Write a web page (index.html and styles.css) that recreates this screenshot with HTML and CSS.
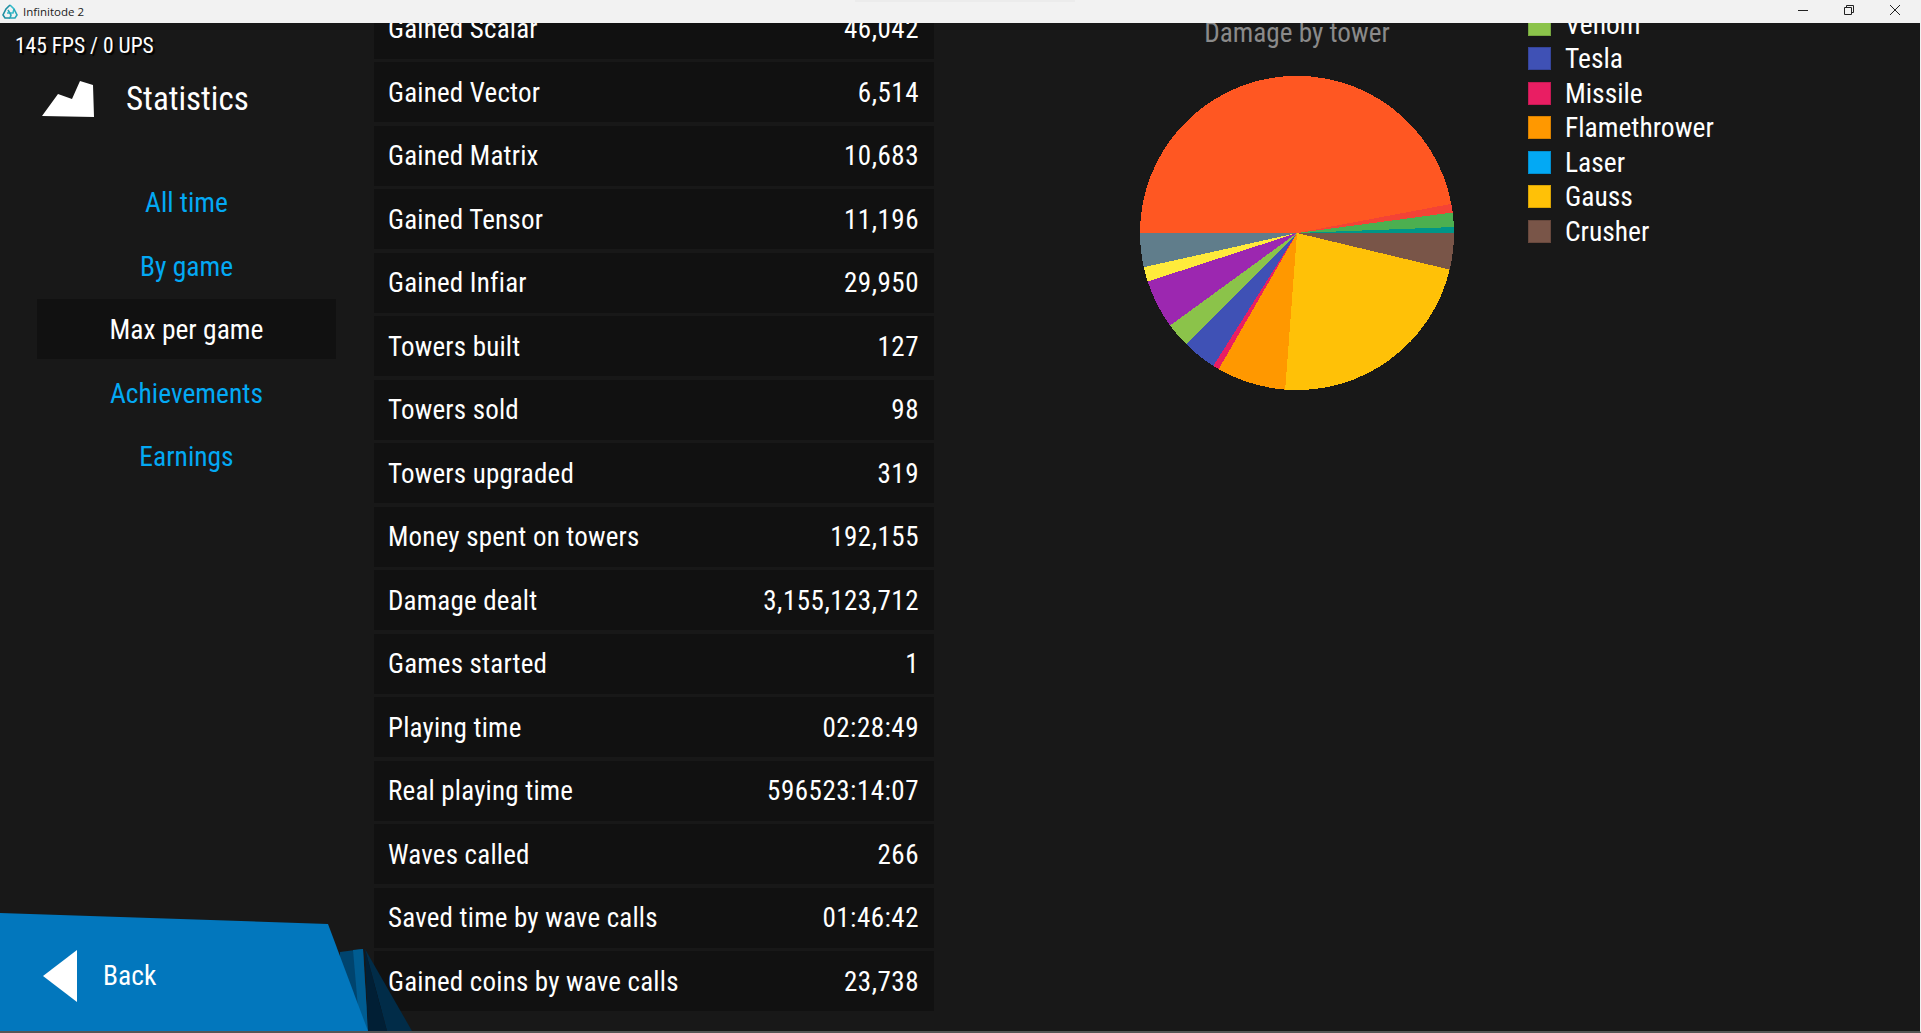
FILE: index.html
```html
<!DOCTYPE html>
<html lang="en">

<head>
    <meta charset="UTF-8">
    <title>Infinitode 2</title>
    <link rel="stylesheet" href="styles.css">
</head>

<body>
    <header class="titlebar">
        <svg class="app-icon" width="16" height="16" viewBox="0 0 16 16" fill="none" stroke-width="1.6">
            <path d="M8 1 L12 5 L11 9 L5 9" stroke="#35bccb"/>
            <path d="M8 1 L4 5 L1 11 L3 14 L8 14" stroke="#1f8fa3"/>
            <path d="M6 6 L9 11 L8 14 L13 14 L15 11 L12 5" stroke="#2aa7b8"/>
        </svg>
        <span class="app-name">Infinitode 2</span>
        <div class="win-buttons">
            <svg width="12" height="12" viewBox="0 0 12 12"><path d="M1 6.5H11" stroke="#222" fill="none"/></svg>
            <svg width="12" height="12" viewBox="0 0 12 12"><path d="M1.5 3.5H8.5V10.5H1.5Z M3.5 3.5V1.5H10.5V8.5H8.5" stroke="#222" fill="none"/></svg>
            <svg width="12" height="12" viewBox="0 0 12 12"><path d="M1 1L11 11M11 1L1 11" stroke="#222" fill="none"/></svg>
        </div>
    </header>

    <main class="screen">
        <!-- left menu -->
        <nav class="sidebar">
            <div class="fps">145 FPS / 0 UPS</div>
            <div class="side-title">
                <svg class="side-icon" width="54" height="38" viewBox="0 0 54 38">
                    <polygon points="1,36 17,14 31,19 39,1 52,5 53,37" fill="#fff"/>
                </svg>
                <span>Statistics</span>
            </div>
            <ul class="menu">
                <li>All time</li>
                <li>By game</li>
                <li class="on">Max per game</li>
                <li>Achievements</li>
                <li>Earnings</li>
            </ul>
        </nav>

        <!-- stat rows -->
        <section class="stats">
            <div class="row"><span>Gained Scalar</span><span class="val">46,042</span></div>
            <div class="row"><span>Gained Vector</span><span class="val">6,514</span></div>
            <div class="row"><span>Gained Matrix</span><span class="val">10,683</span></div>
            <div class="row"><span>Gained Tensor</span><span class="val">11,196</span></div>
            <div class="row"><span>Gained Infiar</span><span class="val">29,950</span></div>
            <div class="row"><span>Towers built</span><span class="val">127</span></div>
            <div class="row"><span>Towers sold</span><span class="val">98</span></div>
            <div class="row"><span>Towers upgraded</span><span class="val">319</span></div>
            <div class="row"><span>Money spent on towers</span><span class="val">192,155</span></div>
            <div class="row"><span>Damage dealt</span><span class="val">3,155,123,712</span></div>
            <div class="row"><span>Games started</span><span class="val">1</span></div>
            <div class="row"><span>Playing time</span><span class="val">02:28:49</span></div>
            <div class="row"><span>Real playing time</span><span class="val">596523:14:07</span></div>
            <div class="row"><span>Waves called</span><span class="val">266</span></div>
            <div class="row"><span>Saved time by wave calls</span><span class="val">01:46:42</span></div>
            <div class="row"><span>Gained coins by wave calls</span><span class="val">23,738</span></div>
        </section>

        <!-- pie chart -->
        <section class="chart">
            <h2 class="chart-title">Damage by tower</h2>
            <svg class="pie" width="316" height="316" viewBox="-158 -158 316 316">
                <path d="M0 0L157 0A157 157 0 0 1 152.7 36.6Z" fill="#795548"/>
                <path d="M0 0L152.7 36.6A157 157 0 0 1 -11.8 156.6Z" fill="#ffc107"/>
                <path d="M0 0L-11.8 156.6A157 157 0 0 1 -78.3 136.1Z" fill="#ff9800"/>
                <path d="M0 0L-78.3 136.1A157 157 0 0 1 -83.7 132.9Z" fill="#e91e63"/>
                <path d="M0 0L-83.7 132.9A157 157 0 0 1 -111 111Z" fill="#3f51b5"/>
                <path d="M0 0L-111 111A157 157 0 0 1 -126.9 92.5Z" fill="#8bc34a"/>
                <path d="M0 0L-126.9 92.5A157 157 0 0 1 -149.3 48.5Z" fill="#9c27b0"/>
                <path d="M0 0L-149.3 48.5A157 157 0 0 1 -153.2 34.2Z" fill="#ffeb3b"/>
                <path d="M0 0L-153.2 34.2A157 157 0 0 1 -157 0Z" fill="#607d8b"/>
                <path d="M0 0L-157 0A157 157 0 0 1 154.3 -29.1Z" fill="#ff5722"/>
                <path d="M0 0L154.3 -29.1A157 157 0 0 1 155.7 -20.5Z" fill="#f44336"/>
                <path d="M0 0L155.7 -20.5A157 157 0 0 1 156.9 -6Z" fill="#4caf50"/>
                <path d="M0 0L156.9 -6A157 157 0 0 1 157 0Z" fill="#009688"/>
            </svg>
        </section>

        <ul class="legend">
            <li><i class="sw venom"></i>Venom</li>
            <li><i class="sw tesla"></i>Tesla</li>
            <li><i class="sw missile"></i>Missile</li>
            <li><i class="sw flame"></i>Flamethrower</li>
            <li><i class="sw laser"></i>Laser</li>
            <li><i class="sw gauss"></i>Gauss</li>
            <li><i class="sw crusher"></i>Crusher</li>
        </ul>

        <!-- back button sits over the corner -->
        <svg class="back-shape" width="412" height="120" viewBox="0 0 412 120">
            <polygon points="340,41 363,38 368,120 340,120" fill="#00446e"/>
            <polygon points="353,39 363,38 368,120 360,120" fill="#005c91"/>
            <polygon points="365,38 412,120 387,120" fill="#012c48"/>
            <polygon points="365,38 387,120 368,120" fill="#011f35"/>
            <polygon points="0,2 328,13 368,120 0,120" fill="#0277bd"/>
            <polygon points="43,65 77,39 77,91" fill="#fff"/>
        </svg>
        <div class="back-label">Back</div>
    </main>
</body>

</html>
```
FILE: styles.css
```css
* {
    box-sizing: border-box;
}

html,
body {
    margin: 0;
    height: 100%;
}

body {
    display: flex;
    flex-direction: column;
    background: #181818;
    color: #fff;
    font-family: Roboto, sans-serif;
    font-stretch: 75%;
    overflow: hidden;
}

ul,
li {
    list-style: none;
    margin: 0;
    padding: 0;
}

/* title bar */
.titlebar {
    flex: none;
    position: relative;
    height: 23px;
    background: #f2f2f2;
    color: #222;
    display: flex;
    align-items: center;
    padding-left: 2px;
    font: 11.5px "Open Sans", sans-serif;
    font-stretch: 100%;
}

/* faint shadow along the top edge */
.titlebar::before {
    content: "";
    position: absolute;
    top: 0;
    left: 855px;
    width: 220px;
    height: 2px;
    background: #ececec;
}

.app-icon {
    margin-right: 5px;
}

.win-buttons {
    margin-left: auto;
    display: flex;
    gap: 34px;
    padding-right: 20px;
    padding-bottom: 3px;
}

/* game screen */
.screen {
    flex: 1;
    position: relative;
    display: flex;
    overflow: hidden;
    border-right: 1px solid #f2f2f2;
    border-bottom: 2px solid #555;
}

.sidebar {
    flex: none;
    width: 374px;
}

.fps {
    margin: 10px 0 0 15px;
    font-size: 21.5px;
    line-height: 26px;
    text-shadow: 2px 2px 1px #000;
}

.side-title {
    display: flex;
    align-items: center;
    height: 40px;
    margin: 19px 0 0 41px;
    font-size: 33px;
}

.side-icon {
    margin: 1px 31px 0 0;
}

.menu {
    margin: 54px 37px 0;
    width: 299px;
    font-size: 27.5px;
    text-align: center;
    color: #03a9f4;
}

.menu li {
    height: 60px;
    line-height: 62px;
    margin-bottom: 3.5px;
}

.menu .on {
    background: #111;
    color: #fff;
}

.stats {
    flex: none;
    width: 560px;
    margin-top: -24.5px;
    display: flex;
    flex-direction: column;
    gap: 3.5px;
}

.row {
    flex: none;
    height: 60px;
    padding: 1px 15px 0 14px;
    background: #111;
    display: flex;
    justify-content: space-between;
    align-items: center;
    font-size: 27px;
    letter-spacing: 0.2px;
}

/* digits run a bit wider than the labels */
.val {
    letter-spacing: 0.5px;
}

/* chart sits on the free area right of the rows */
.chart {
    flex: none;
    width: 316px;
    margin: 0 73px 0 205px;
    display: flex;
    flex-direction: column;
    align-items: center;
}

.chart-title {
    margin: 0 0 18px;
    height: 34px;
    line-height: 20px;
    font-size: 27.2px;
    font-weight: 400;
    color: #8a8a8a;
}

.pie {
    shape-rendering: crispEdges;
}

.legend {
    margin: -16px 0 0;
    font-size: 27.5px;
}

.legend li {
    display: flex;
    align-items: center;
    height: 34.5px;
}

.sw {
    width: 23px;
    height: 23px;
    margin-right: 14px;
    border: 1px solid rgba(0, 0, 0, 0.15);
}

.venom { background: #8bc34a; }
.tesla { background: #3f51b5; }
.missile { background: #e91e63; }
.flame { background: #ff9800; }
.laser { background: #03a9f4; }
.gauss { background: #ffc107; }
.crusher { background: #795548; }

.back-shape {
    position: absolute;
    left: 0;
    bottom: 0;
}

.back-label {
    position: absolute;
    left: 103px;
    bottom: 39px;
    font-size: 27.5px;
}
```
